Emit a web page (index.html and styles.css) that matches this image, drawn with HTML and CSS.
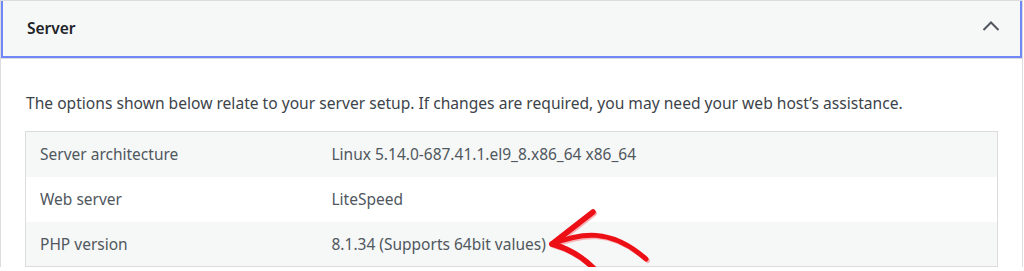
FILE: index.html
```html
<!DOCTYPE html>
<html lang="en">
<head>
  <meta charset="UTF-8" />
  <meta name="viewport" content="width=device-width, initial-scale=1.0"/>
  <title>Site Health - Server</title>
  <link rel="stylesheet" href="styles.css">
</head>
<body>

  <div class="panel">
    <div class="panel-head">
      <h2>Server</h2>
      <svg class="chevron" width="18" height="12" viewBox="0 0 18 12">
        <path d="M1.5 10 L9 2.5 L16.5 10" fill="none" stroke="#50575e" stroke-width="2"/>
      </svg>
    </div>

    <div class="panel-body">
      <p class="intro">The options shown below relate to your server setup. If changes are required, you may need your web host&#8217;s assistance.</p>

      <div class="table-wrap">
        <table class="info">
          <tr>
            <td>Server architecture</td>
            <td>Linux 5.14.0-687.41.1.el9_8.x86_64 x86_64</td>
          </tr>
          <tr>
            <td>Web server</td>
            <td>LiteSpeed</td>
          </tr>
          <tr>
            <td>PHP version</td>
            <td>8.1.34 (Supports 64bit values)</td>
          </tr>
        </table>

        <!-- red hand-drawn arrow -->
        <svg class="arrow" width="120" height="80" viewBox="0 0 120 80">
          <g fill="none" stroke="#f7b3b6" stroke-width="5" stroke-linecap="round" transform="translate(1.5 1.5)">
            <path d="M12 39 C 40 28, 70 22, 106 54"/>
            <path d="M12 39 L 53 7"/>
            <path d="M12 39 C 30 44, 46 54, 58 68"/>
          </g>
          <g fill="none" stroke="#ec1016" stroke-linecap="round">
            <path d="M12 39 C 40 28, 70 22, 106 54" stroke-width="5"/>
            <path d="M12 39 L 53 7" stroke-width="5.5"/>
            <path d="M12 39 C 30 44, 46 54, 58 68" stroke-width="5.5"/>
          </g>
        </svg>
      </div>
    </div>
  </div>

</body>
</html>
```

FILE: styles.css
```css
* { box-sizing: border-box; }

body {
  margin: 0;
  background: #fff;
  font-family: 'Noto Sans', 'Open Sans', sans-serif;
  overflow: hidden;
}

.panel {
  width: 1023px;
  border: 1px solid #dcdcde;
  border-bottom: none;
  background: #fff;
}

.panel-head {
  height: 57px;
  background: #f6f7f7;
  border: 2px solid #7088f7;
  border-top: none;
  display: flex;
  align-items: center;
  justify-content: space-between;
  padding: 0 20px 2px 24px;
}

.panel-head h2 {
  margin: 0;
  font-size: 15.5px;
  font-weight: 600;
  color: #1d2327;
}

.chevron { display: block; margin-top: -3px; }

.panel-body {
  border-top: 1px solid #dcdcde;
  padding: 0 24px;
}

.intro {
  margin: 33px 0 17px 1px;
  font-size: 15.6px;
  line-height: 22px;
  color: #3c434a;
}

.table-wrap { position: relative; }

.info {
  width: 973px;
  border-collapse: collapse;
  border: 1px solid #dcdcde;
  font-size: 15.5px;
  color: #50575e;
}

.info td {
  height: 45px;
  padding: 0 14px;
  vertical-align: middle;
}

.info td:first-child { width: 292px; }

.info tr:nth-child(odd) { background: #f6f7f7; }

.arrow {
  position: absolute;
  left: 515px;
  top: 74px;
}
```
